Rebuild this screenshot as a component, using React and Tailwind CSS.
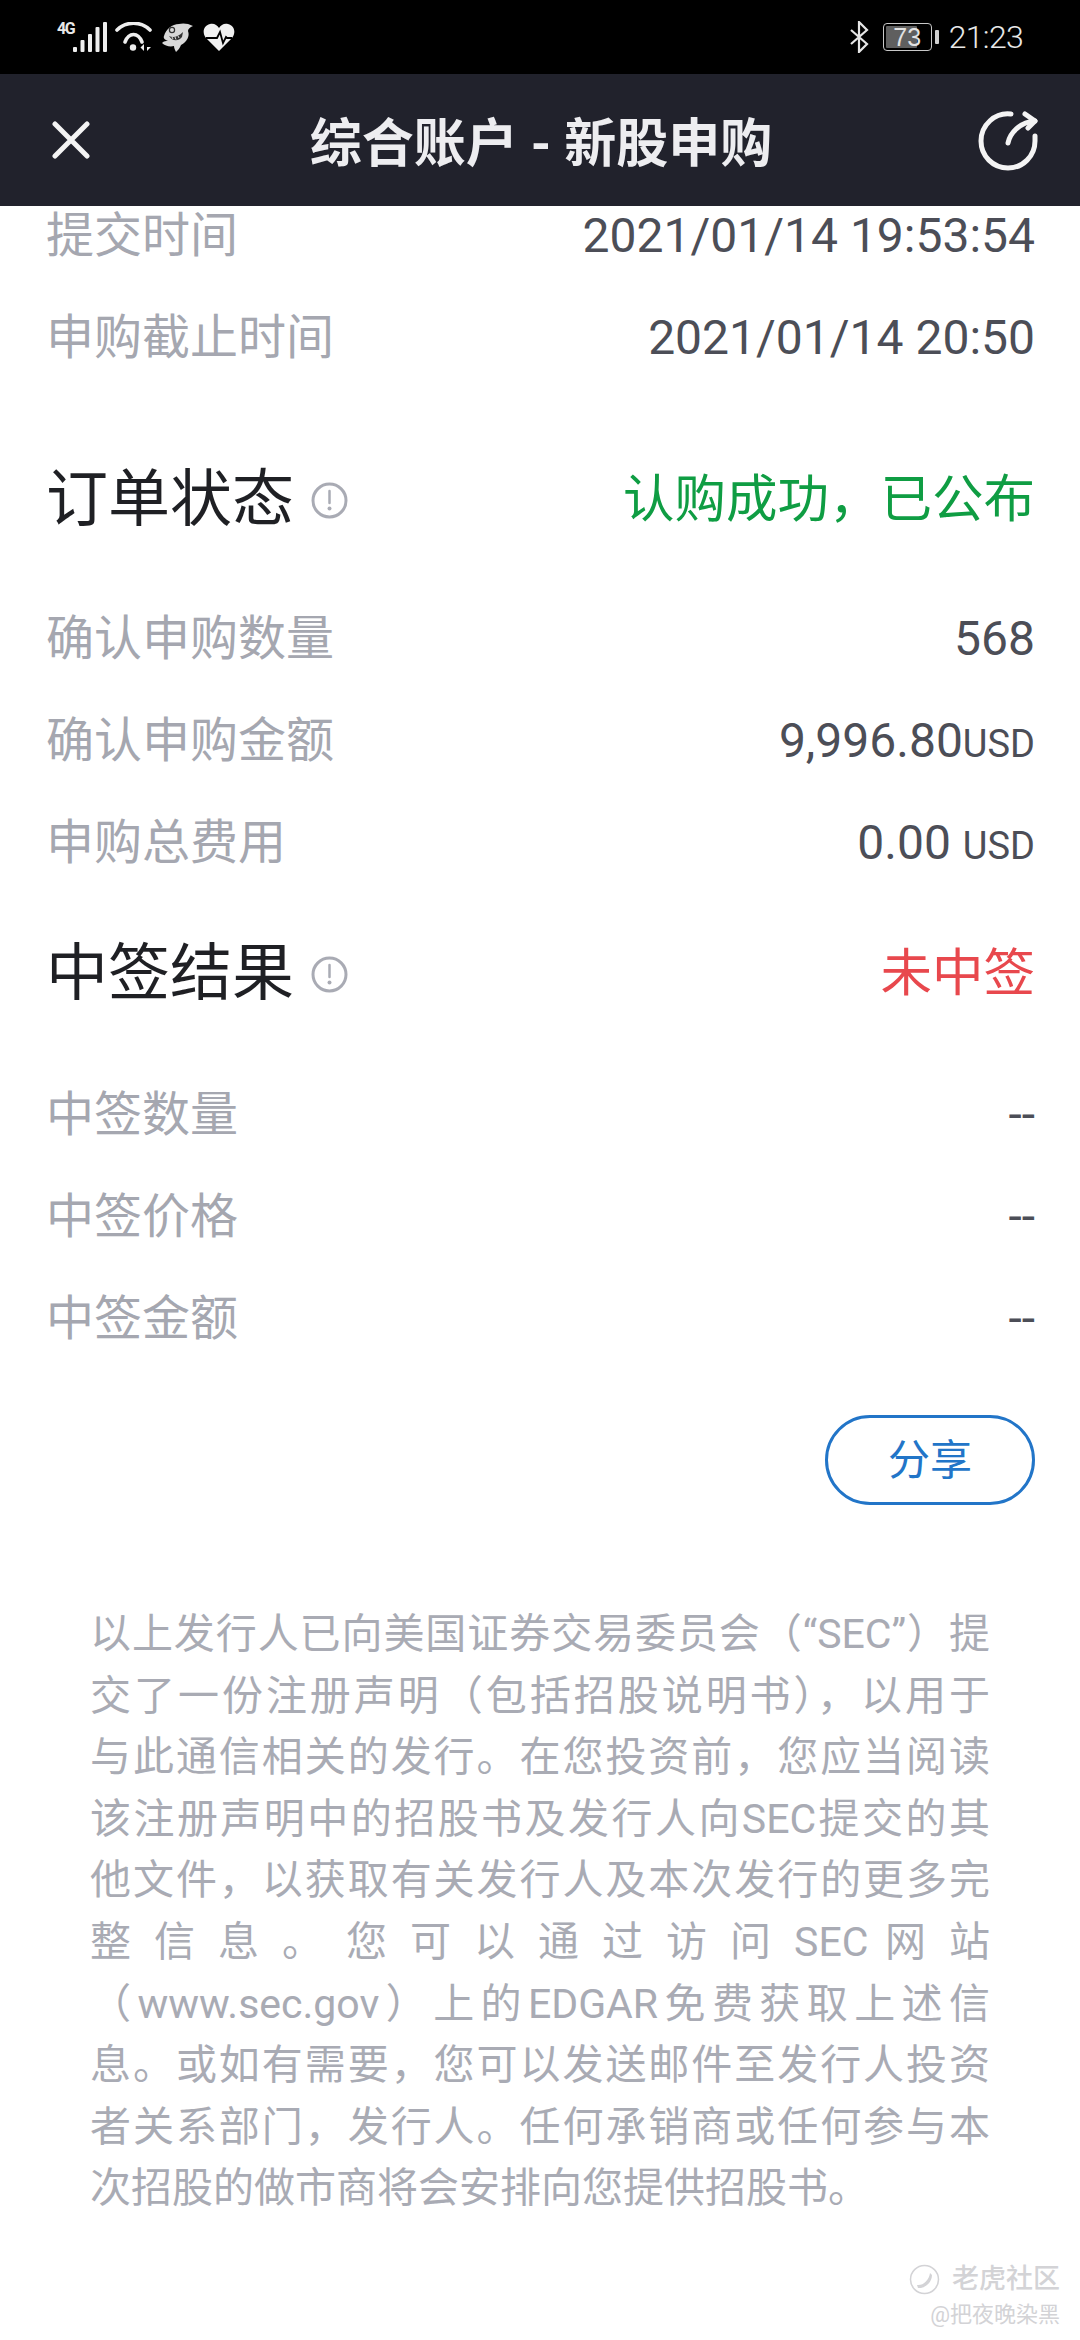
import React from 'react';

const cjk = "font-['Roboto','Noto_Sans_CJK_SC',sans-serif]";

const SignalIcon = () => (
  <div className="flex items-end h-[30px]">
    <span className="self-start mt-[-1px] w-[16px] text-[16px] leading-[16px] font-bold tracking-[-1.5px] text-[#e8e8e8] font-['Roboto',sans-serif]">4G</span>
    <svg width="34" height="30" viewBox="16 0 34 30" fill="none">
      <rect x="16" y="25" width="4" height="5" rx="1" fill="#eee" />
      <rect x="23.5" y="18" width="4" height="12" rx="1" fill="#eee" />
      <rect x="31" y="12" width="4" height="18" rx="1" fill="#eee" />
      <rect x="38.5" y="5" width="4" height="25" rx="1" fill="#eee" />
      <rect x="46" y="0" width="4" height="30" rx="1" fill="#eee" />
    </svg>
  </div>
);

const WifiIcon = () => (
  <svg width="37" height="30" viewBox="0 0 37 30" fill="none" stroke="#eee" strokeWidth="3.6" strokeLinecap="round">
    <path d="M2 8 C11 -1 26 -1 35 8" />
    <path d="M10 20 C14 10 23 10 27 20" />
    <circle cx="18" cy="25.5" r="3.2" fill="#eee" stroke="none" />
    <path d="M29 22 V29 L25.5 25.5 Z" fill="#eee" stroke="none" />
    <path d="M32 22 V29 L36 25 H32 Z" fill="#eee" stroke="none" />
  </svg>
);

const SharkIcon = () => (
  <svg width="31" height="30" viewBox="0 0 31 30">
    <path d="M2 14 C4 7 10 2 17 2 C20 1 26 1 31 4 C28 5 26 7 26 9 C28 14 25 20 19 23 C18 26 16 28 14 30 C13 28 12 26 12 24 C8 25 3 24 0 21 C2 19 4 19 6 19 C3 18 1 16 2 14 Z" fill="#d8d8d8" />
    <circle cx="10" cy="8" r="2.6" fill="none" stroke="#333" strokeWidth="1.2" />
    <path d="M7 14 C11 16 16 15 21 10 L20 15 C16 20 10 19 7 14 Z" fill="#333" />
    <path d="M10 15 L11 17 M13 15 L14 17.5 M16 14 L17 16" stroke="#ddd" strokeWidth="1" />
  </svg>
);

const HeartIcon = () => (
  <svg width="32" height="28" viewBox="0 0 32 28">
    <path d="M16 28 L3 15 C-1 10 0 3 7 1 C11 0 14 2 16 5 C18 2 21 0 25 1 C32 3 33 10 29 15 Z" fill="#f0f0f0" />
    <path d="M3 15 H14 L17 9 L20 20 L23 14 L24 15 H29" fill="none" stroke="#000" strokeWidth="1.8" />
  </svg>
);

const BluetoothIcon = () => (
  <svg width="20" height="32" viewBox="0 0 20 32" fill="none" stroke="#e6e6e6" strokeWidth="2.2">
    <path d="M2 9 L18 23 L10 31 V1 L18 9 L2 23" />
  </svg>
);

const InfoIcon = () => (
  <svg width="37" height="37" viewBox="0 0 37 37" fill="none">
    <circle cx="18.5" cy="18.5" r="16.5" stroke="#a9abb4" strokeWidth="3" />
    <path d="M18.5 9 V21" stroke="#a9abb4" strokeWidth="2.5" strokeLinecap="round" />
    <circle cx="18.5" cy="26.5" r="2" fill="#a9abb4" />
  </svg>
);

const StatusBar = () => (
  <div className="h-[74px] bg-black flex items-center justify-between pl-[57px] pr-[57px]">
    <div className="flex items-center">
      <SignalIcon />
      <div className="ml-[8px]"><WifiIcon /></div>
      <div className="ml-[10px]"><SharkIcon /></div>
      <div className="ml-[10px]"><HeartIcon /></div>
    </div>
    <div className="flex items-center">
      <BluetoothIcon />
      <div className="ml-[14px] w-[49px] h-[28px] rounded-[4px] border border-[#c8c8c8] p-[2px] relative">
        <div className="h-full w-[73%] bg-[#5f5f5f] rounded-[1px]"></div>
        <span className="absolute inset-0 flex items-center justify-center text-[25px] leading-none text-[#e2e2e2] font-['Liberation_Sans',sans-serif]">73</span>
      </div>
      <div className="ml-[3px] w-[4px] h-[14px] bg-[#d0d0d0] rounded-[1px]"></div>
      <span className="ml-[10px] text-[32px] tracking-[-0.7px] leading-none text-[#e8e8e8] font-['Roboto',sans-serif] font-light">21:23</span>
    </div>
  </div>
);

const Header = () => (
  <div className="relative z-10 h-[132px] bg-[#21222c] flex items-center justify-between pl-[52px] pr-[42px]">
    <div className="w-[60px]">
      <svg width="38" height="38" viewBox="0 0 38 38" fill="none" stroke="#f4f4f4" strokeWidth="5" strokeLinecap="round">
        <path d="M3 3 L35 35 M35 3 L3 35" />
      </svg>
    </div>
    <span className={`${cjk} pt-[10px] pr-[8px] text-[52px] leading-none font-bold text-[#ededf0]`}>综合账户 - 新股申购</span>
    <svg className="mt-[2px]" width="60" height="60" viewBox="0 0 60 60" fill="none" stroke="#f4f4f4" strokeWidth="5" strokeLinecap="round" strokeLinejoin="round">
      <path d="M33 3 C17 1 3 14 3 30 C3 45 15 57 30 57 C45 57 57 45 57 30 C57 28 57 27 57 25" />
      <path d="M30 32 C32 22 42 11 57 10" />
      <path d="M47 3 L57 10 L50 17" />
    </svg>
  </div>
);

const Row = ({ label, children }) => (
  <div className="h-[102px] flex items-center justify-between">
    <span className={`${cjk} text-[48px] leading-none text-[#a5a7b0]`}>{label}</span>
    <span className={`${cjk} text-[48px] leading-none text-[#4c4e57]`}>{children}</span>
  </div>
);

const SectionHead = ({ title, status, color }) => (
  <div className="flex items-center justify-between">
    <div className="flex items-center">
      <span className={`${cjk} text-[62px] leading-none text-[#1f2024]`}>{title}</span>
      <span className="ml-[17px]"><InfoIcon /></span>
    </div>
    <span className={`${cjk} text-[51.5px] leading-none ${color}`}>{status}</span>
  </div>
);

const lines = [
  '以上发行人已向美国证券交易委员会（“SEC”）提',
  '交了一份注册声明（包括招股说明书），以用于',
  '与此通信相关的发行。在您投资前，您应当阅读',
  '该注册声明中的招股书及发行人向SEC提交的其',
  '他文件，以获取有关发行人及本次发行的更多完',
  '整 信 息 。 您 可 以 通 过 访 问 SEC 网 站',
  '（www.sec.gov）上的EDGAR免费获取上述信',
  '息。或如有需要，您可以发送邮件至发行人投资',
  '者关系部门，发行人。任何承销商或任何参与本',
];

export default function App() {
  return (
    <div className="relative w-[1080px] h-[2340px] bg-white overflow-hidden">
      <StatusBar />
      <Header />

      <div className="pl-[46px] pr-[45px] -mt-[21px]">
        <Row label="提交时间">2021/01/14 19:53:54</Row>
        <Row label="申购截止时间">2021/01/14 20:50</Row>

        <div className="mt-[80px] mb-[57px]">
          <SectionHead title="订单状态" status="认购成功，已公布" color="text-[#0f9d43]" />
        </div>
        <Row label="确认申购数量">568</Row>
        <Row label="确认申购金额">
          9,996.80<span className="text-[38px]">USD</span>
        </Row>
        <Row label="申购总费用">
          0.00 <span className="text-[38px]">USD</span>
        </Row>

        <div className="mt-[49px] mb-[59px]">
          <SectionHead title="中签结果" status="未中签" color="text-[#e8484d]" />
        </div>
        <Row label="中签数量">--</Row>
        <Row label="中签价格">--</Row>
        <Row label="中签金额">--</Row>

        <div className="flex justify-end mt-[45px]">
          <button className={`${cjk} w-[210px] h-[90px] rounded-full border-[3px] border-[#2275c8] text-[42px] text-[#2275c8]`}>
            分享
          </button>
        </div>
      </div>

      <div className={`${cjk} mt-[99px] px-[90px] text-[41px] leading-[61.6px] text-[#a9abb4]`}>
        {lines.map((line) => (
          <div key={line} className="[text-align:justify] [text-align-last:justify] whitespace-nowrap">{line}</div>
        ))}
        <div>次招股的做市商将会安排向您提供招股书。</div>
      </div>

      {/* watermark */}
      <div className="absolute right-[20px] top-[2264px] flex flex-col items-end text-[#d3d3d6]">
        <div className="flex items-center">
          <svg width="31" height="31" viewBox="0 0 31 31" fill="none" stroke="#d3d3d6" strokeWidth="1.5">
            <circle cx="15.5" cy="15.5" r="14" />
            <path d="M8 21 C14 22 20 16 21 9 L23 11 C23 19 15 25 9 24 Z" fill="#d3d3d6" stroke="none" />
          </svg>
          <span className={`${cjk} ml-[12px] text-[27px] leading-none font-medium`}>老虎社区</span>
        </div>
        <span className={`${cjk} mt-[9px] text-[22px] leading-none`}>@把夜晚染黑</span>
      </div>
    </div>
  );
}
